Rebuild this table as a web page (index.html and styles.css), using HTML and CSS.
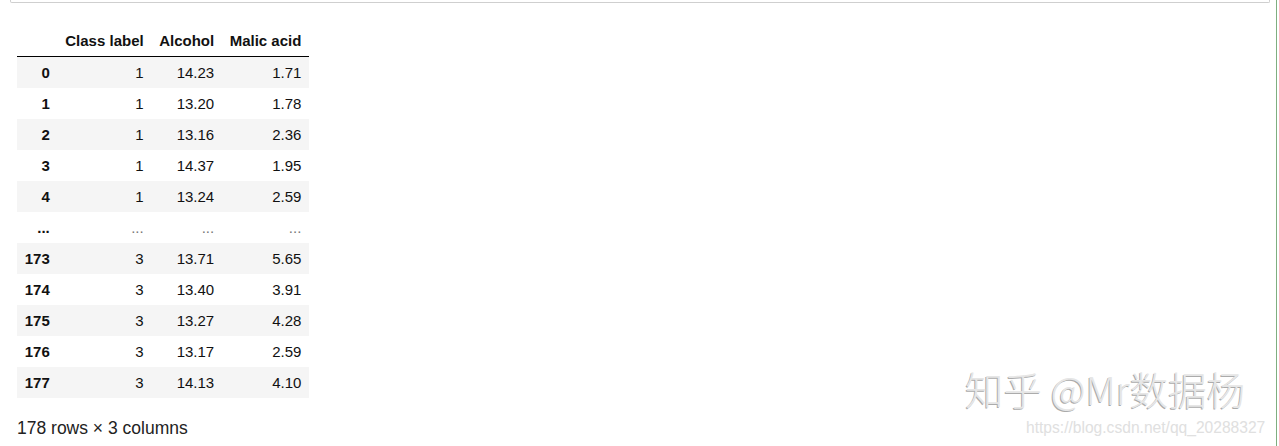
FILE: index.html
```html
<!DOCTYPE html>
<html lang="zh">
<head>
    <meta charset="UTF-8">
    <title>wine data</title>
    <link rel="stylesheet" href="styles.css">
</head>
<body>
    <div class="page">
        <!-- bas de la cellule d'entrée -->
        <div class="input-edge"></div>

        <div class="output">
            <table class="dataframe">
                <thead>
                    <tr><th></th><th>Class label</th><th>Alcohol</th><th>Malic acid</th></tr>
                </thead>
                <tbody>
                    <tr><th>0</th><td>1</td><td>14.23</td><td>1.71</td></tr>
                    <tr><th>1</th><td>1</td><td>13.20</td><td>1.78</td></tr>
                    <tr><th>2</th><td>1</td><td>13.16</td><td>2.36</td></tr>
                    <tr><th>3</th><td>1</td><td>14.37</td><td>1.95</td></tr>
                    <tr><th>4</th><td>1</td><td>13.24</td><td>2.59</td></tr>
                    <tr><th>...</th><td class="dots">...</td><td class="dots">...</td><td class="dots">...</td></tr>
                    <tr><th>173</th><td>3</td><td>13.71</td><td>5.65</td></tr>
                    <tr><th>174</th><td>3</td><td>13.40</td><td>3.91</td></tr>
                    <tr><th>175</th><td>3</td><td>13.27</td><td>4.28</td></tr>
                    <tr><th>176</th><td>3</td><td>13.17</td><td>2.59</td></tr>
                    <tr><th>177</th><td>3</td><td>14.13</td><td>4.10</td></tr>
                </tbody>
            </table>
            <p class="shape">178 rows × 3 columns</p>
        </div>

        <div class="watermark">知乎 @Mr数据杨</div>
        <div class="source">https://blog.csdn.net/qq_20288327</div>
    </div>
</body>
</html>
```

FILE: styles.css
```css
* { box-sizing: border-box; margin: 0; padding: 0; }
body { font-family: 'Liberation Sans', Arial, sans-serif; background-color: #fff; color: #000; }

.page { position: relative; width: 1277px; height: 446px; overflow: hidden; border-right: 1px solid #7fae7f; }
.input-edge { height: 3px; margin: 0 6px 0 10px; border: 1px solid #cfcfcf; border-top: none; border-radius: 0 0 2px 2px; }

.output { padding: 22px 0 0 17px; }
.dataframe { border-collapse: collapse; font-size: 15px; line-height: 16px; color: #111; }
.dataframe th, .dataframe td { padding: 7.5px 7.75px; text-align: right; vertical-align: middle; white-space: nowrap; }
.dataframe thead th { border-bottom: 1px solid #000; font-weight: bold; }
.dataframe tbody th { font-weight: bold; }
.dataframe tbody tr:nth-child(odd) { background-color: #f5f5f5; }
.dataframe .dots { color: #777; }
.shape { font-size: 17.5px; line-height: 20px; margin-top: 20px; color: #222; }

.watermark { position: absolute; left: 965px; top: 366px; font-family: 'Noto Sans CJK SC', sans-serif; font-weight: 300; font-size: 38.5px; line-height: 44px; color: #e6e6e6; text-shadow: -1px 1px 0 #ababab; white-space: nowrap; }
.source { position: absolute; left: 1026px; top: 419px; font-size: 15.6px; line-height: 17px; color: #e0e0e0; white-space: nowrap; }
```
